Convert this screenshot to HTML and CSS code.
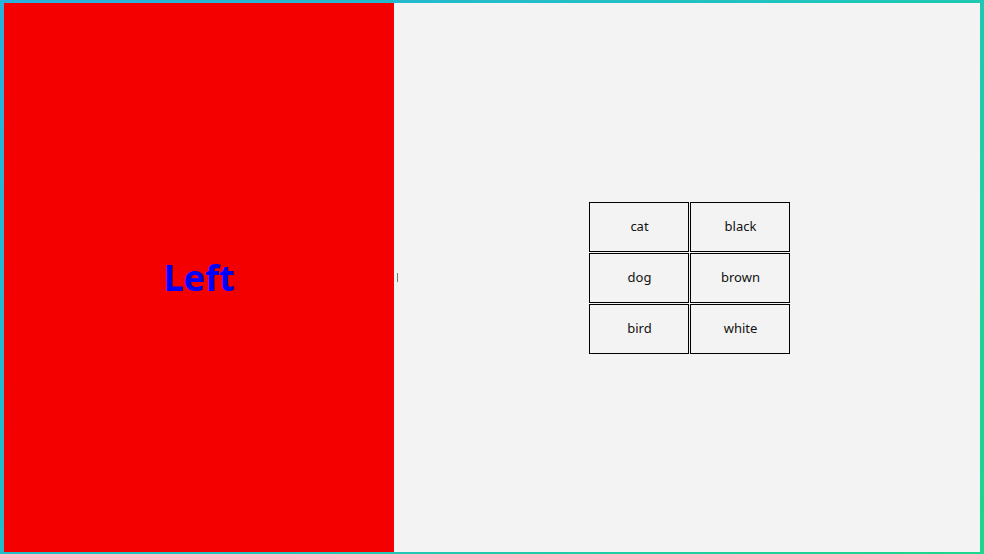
FILE: index.html
```html
<!DOCTYPE html>
<html>
<head>
<meta charset="utf-8">
<link rel="stylesheet" href="styles.css">
</head>
<body>
<div class="frame">
  <div class="left"><span class="left-label">Left</span></div>
  <div class="splitter"><span class="handle"></span></div>
  <div class="right">
    <div class="grid">
      <div class="cell">cat</div>
      <div class="cell">black</div>
      <div class="cell">dog</div>
      <div class="cell">brown</div>
      <div class="cell">bird</div>
      <div class="cell">white</div>
    </div>
  </div>
</div>
</body>
</html>
```
FILE: styles.css
```css
html, body {
  margin: 0;
  padding: 0;
  width: 984px;
  height: 554px;
  overflow: hidden;
}
body {
  background: linear-gradient(135deg, #2ab0dc 0%, #1fc3bf 50%, #1ed68a 100%);
  font-family: "Noto Sans", "Open Sans", sans-serif;
}
.frame {
  box-sizing: border-box;
  width: 984px;
  height: 554px;
  padding: 3px 4px 2px 4px;
  display: flex;
}
.left {
  width: 390px;
  background: #f50000;
  display: flex;
  align-items: center;
  justify-content: center;
}
.left-label {
  color: #0000ff;
  font-weight: bold;
  font-size: 36px;
  line-height: 1;
}
.splitter {
  width: 4px;
  padding-left: 2px;
  box-sizing: border-box;
  background: #f3f3f3;
  display: flex;
  align-items: center;
  justify-content: center;
}
.handle {
  width: 1px;
  height: 9px;
  background: #777;
}
.right {
  flex: 1;
  background: #f3f3f3;
  display: flex;
  align-items: center;
  justify-content: center;
}
.grid {
  display: grid;
  grid-template-columns: 100px 100px;
  grid-auto-rows: 50px;
  gap: 1px;
}
.cell {
  box-sizing: border-box;
  border: 1px solid #000;
  padding: 0 0 2px 2px;
  display: flex;
  align-items: center;
  justify-content: center;
  font-size: 13px;
  color: #111;
}
```
